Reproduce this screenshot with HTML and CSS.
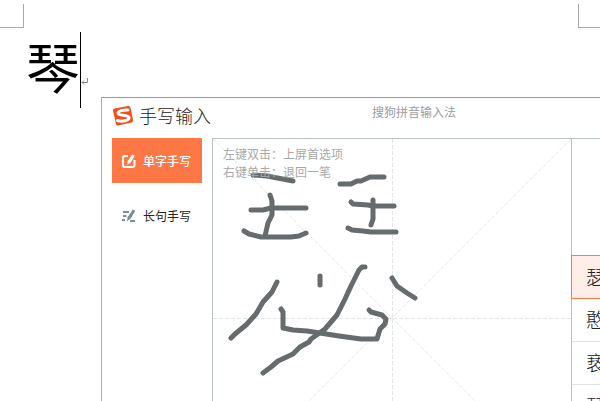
FILE: index.html
```html
<!DOCTYPE html>
<html lang="zh-CN">
<head>
<meta charset="utf-8">
<title>手写输入</title>
<link rel="stylesheet" href="styles.css">
</head>
<body>
<div class="page">
  <div class="margins"><span class="corner left"></span><span class="corner right"></span></div>
  <p class="line"><span class="typed">琴</span><span class="caret"></span>
    <svg class="mark" width="8" height="8" viewBox="0 0 8 8"><path d="M6.500 0v4.500H1M3 2.500L1 4.500l2 2" /></svg>
  </p>
</div>
<main class="ime">
  <header class="bar">
    <svg class="logo" width="22" height="22" viewBox="0 0 22 22"><path class="tile" d="M1 5.500Q.800 4 2.500 3.500L16 1Q18 .8 18.500 2.500L21 15Q21.200 17 19.500 17.500L6 20.500Q4.500 20.600 4 19Z"/><path class="swoosh" d="M16 5C12 4.500 5.500 6 6 8.500S16.500 9.500 17 12.500 10 17 5.500 15.500"/></svg>
    <h1>手写输入</h1>
    <span class="name">搜狗拼音输入法</span>
  </header>
  <div class="body">
    <nav class="tabs">
      <button class="tab active"><svg width="14" height="14" viewBox="0 0 14 14"><path class="line-icon" d="M6 2H3Q1 2 1 4V11Q1 13 3 13H10.500Q12.500 13 12.500 11V6"/><path class="solid" d="M10 0L13.500 1.500L9 9L5 11.500L5 7.500Z"/></svg>单字手写</button>
      <button class="tab"><svg width="14" height="14" viewBox="0 0 14 14"><path class="line-icon" d="M1 3H7M1 7H4.500M0 11H3M8 12H13"/><path class="solid" d="M10.500 0L14 1.500L9 10L4.500 13L5 8.500Z"/></svg>长句手写</button>
    </nav>
    <section class="pad">
      <svg class="ink" width="358" height="358" viewBox="0 0 358 358">
        <g class="guide"><path d="M0 179.500H358M179.500 0V358"/><path class="diag" d="M0 0L358 358M358 0L0 358"/></g>
        <g class="stroke">
          <path d="M40 36L54 37L80 42"/>
          <path d="M57 56L59 62V76L55 84L52 97"/>
          <path d="M38 71H50L58 69H93"/>
          <path d="M31 92L36 95L48 98H78L86 97L93 94"/>
          <path d="M127 45H138L144 42L148 42L157 38H171"/>
          <path d="M138 63L140 65L155 66L160 67H181"/>
          <path d="M160 61V80L158 86"/>
          <path d="M135 89L139 91L150 92L158 93H183"/>
          <path d="M64 143L59 153L50 163L43 175L33 186L22 195L18 199"/>
          <path d="M107 137V146"/>
          <path d="M68 170L70 173V189L80 191L94 192L126 197L148 200H164L167 190L172 185L173 180L169 176L158 173L156 171"/>
          <path d="M152 128L149 128L146 131L138 147L132 160L124 176L112 190L98 200L96 203L87 208L80 215L65 222L58 228L50 234"/>
          <path d="M179 139L184 147L194 154L202 159"/>
        </g>
      </svg>
      <p class="hint">左键双击：上屏首选项<br>右键单击：退回一笔</p>
    </section>
    <ol class="candidates">
      <li><button class="cand chosen">瑟</button></li>
      <li><button class="cand">憨</button></li>
      <li><button class="cand">亵</button></li>
      <li><button class="cand">琵</button></li>
    </ol>
  </div>
</main>
</body>
</html>
```
FILE: styles.css
```css
* { box-sizing: border-box; }
body {
  margin: 0;
  height: 100vh;
  overflow: hidden;
  background: #fff;
  font-family: "Noto Sans CJK SC", sans-serif;
  display: flow-root;
}
h1, p, ol { margin: 0; padding: 0; }
button { font: inherit; border: 0; padding: 0; background: none; }
.page { height: 97px; }
.margins { display: flex; justify-content: space-between; padding-top: 4px; }
.corner { width: 24px; height: 24px; border: 0 solid #aaa; border-bottom-width: 1px; }
.left { border-right-width: 1px; }
.right { width: 22px; border-left-width: 1px; }
.line { display: flex; padding: 4px 0 0 26px; }
.typed { font-size: 54px; line-height: 68px; width: 54px; color: #000; }
.caret { width: 1px; height: 76px; background: #000; }
.mark { margin-top: 46px; fill: none; stroke: #888; }
.ime {
  position: relative;
  margin-left: 101px;
  height: calc(100vh - 97px);
  background: #fff;
  border-left: 1px solid #aab0b5;
  border-top: 1px solid #f27d4f;
  overflow: hidden;
}
.bar { display: flex; height: 40px; padding-left: 10px; }
.logo { margin-top: 7px; }
.tile { fill: #f04e1d; }
.swoosh { fill: none; stroke: #fff; stroke-width: 3; stroke-linecap: round; }
h1 { margin-left: 5px; font-size: 18px; line-height: 34px; font-weight: 300; color: #222; }
.name { margin-left: 161px; font-size: 12px; line-height: 28px; color: #9a9da2; }
.body { display: grid; grid-template-columns: 110px 360px 1fr; }
.tabs { display: flex; flex-direction: column; gap: 10px; padding-left: 10px; }
.tab {
  display: flex; align-items: center; gap: 7px;
  width: 90px; height: 45px; padding-left: 10px;
  font-size: 12px; color: #222; white-space: nowrap;
}
.tab .line-icon { fill: none; stroke: #7f8d99; stroke-width: 2; }
.tab .solid { fill: #7f8d99; stroke: #fff; }
.active { background: #ff7744; color: #fff; font-weight: 500; }
.active .line-icon { stroke: #fff; }
.active .solid { fill: #fff; stroke: #ff7744; }
.pad { position: relative; height: 360px; border: 1px solid #b9c0c7; }
.ink { display: block; fill: none; }
.guide { stroke: #e3e5e6; stroke-dasharray: 4 2; }
.guide .diag { stroke: #e9e9e9; stroke-dasharray: 4 2; }
.stroke { stroke: #666b6d; stroke-width: 5; stroke-linecap: round; stroke-linejoin: round; }
.hint { position: absolute; left: 10px; top: 6px; font-size: 12px; line-height: 18px; color: #a9a9a9; }
.candidates { list-style: none; border-top: 1px solid #b9c0c7; padding-top: 116px; margin-left: -1px; }
.cand {
  display: block; width: 100%; height: 43px; padding-left: 14px;
  border-bottom: 1px solid #dde2e6; border-left: 1px solid #b9c0c7;
  font-size: 20px; font-weight: 300; line-height: 40px; text-align: left; color: #222; white-space: nowrap; overflow: hidden;
}
.chosen { height: 44px; border: 1px solid #ff7744; border-right: 0; background: #ffeee8; }
.candidates { position: relative; }
.candidates::before {
  content: ""; position: absolute; left: 0; top: 0; height: 116px; border-left: 1px solid #b9c0c7;
}
```
